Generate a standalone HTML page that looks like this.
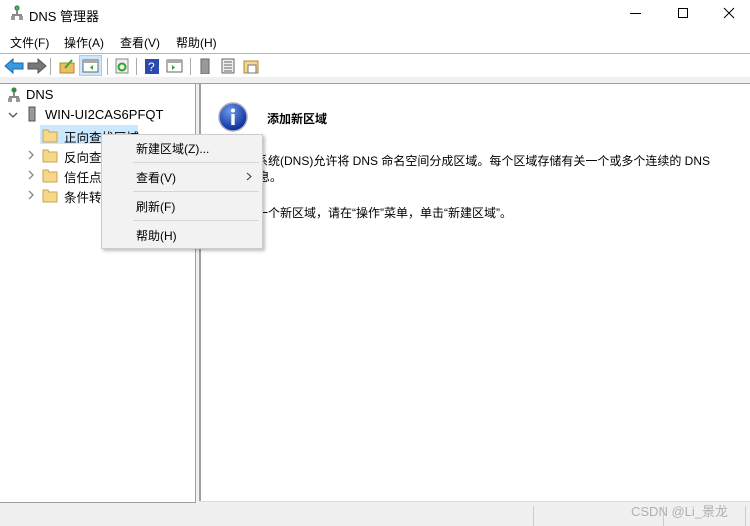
<!DOCTYPE html>
<html><head><meta charset="utf-8"><style>
*{margin:0;padding:0;box-sizing:border-box}
body{width:750px;height:526px;background:#f0f0f0;font-family:"Liberation Sans","Noto Sans CJK SC",sans-serif;font-size:12px;color:#000;position:relative;overflow:hidden}
.a{position:absolute;white-space:nowrap}
</style></head><body>
<div class="a" style="left:0;top:0;width:750px;height:54px;background:#fff"></div>
<svg class="a" style="left:10px;top:5px" width="14" height="16"><circle cx="7" cy="3" r="2.6" fill="#3a8a3a"/><circle cx="7" cy="3" r="1.3" fill="#4aa"/><rect x="6" y="5" width="2" height="4" fill="#888"/><rect x="2" y="9" width="10" height="2" fill="#888"/><rect x="1" y="11" width="4" height="4" fill="#999"/><rect x="9" y="11" width="4" height="4" fill="#999"/></svg>
<div class="a" style="left:29px;top:6px;font-size:13px">DNS 管理器</div>
<div class="a" style="left:630px;top:13px;width:11px;height:1px;background:#000"></div>
<div class="a" style="left:678px;top:8px;width:10px;height:10px;border:1px solid #000"></div>
<svg class="a" style="left:723px;top:7px" width="12" height="12"><path d="M1 1L11 11M11 1L1 11" stroke="#000" stroke-width="1"/></svg>
<div class="a" style="left:10px;top:34px">文件(F)</div>
<div class="a" style="left:64px;top:34px">操作(A)</div>
<div class="a" style="left:120px;top:34px">查看(V)</div>
<div class="a" style="left:176px;top:34px">帮助(H)</div>
<div class="a" style="left:0;top:53px;width:750px;height:1px;background:#b4b4bc"></div>
<div class="a" style="left:0;top:54px;width:750px;height:23px;background:#fff"></div>
<svg class="a" style="left:4px;top:58px" width="20" height="16"><path d="M1 8L9 1V5H19V11H9V15Z" fill="#3a9ae0" stroke="#1a6ab0"/></svg>
<svg class="a" style="left:27px;top:58px" width="20" height="16"><path d="M19 8L11 1V5H1V11H11V15Z" fill="#777" stroke="#555"/></svg>
<div class="a" style="left:50px;top:58px;width:1px;height:17px;background:#aaa"></div>
<svg class="a" style="left:59px;top:58px" width="16" height="16"><rect x="1" y="5" width="14" height="10" fill="#e8c060" stroke="#b08a30"/><path d="M6 10L13 2" stroke="#3a3" stroke-width="2"/></svg>
<div class="a" style="left:79px;top:55px;width:23px;height:21px;background:#cce8ff;border:1px solid #99d1ff"></div>
<svg class="a" style="left:82px;top:58px" width="17" height="16"><rect x="1" y="2" width="15" height="12" fill="#fff" stroke="#666"/><rect x="1" y="2" width="15" height="3" fill="#aaa"/><path d="M11 7L8 9.5L11 12Z" fill="#2a2"/></svg>
<div class="a" style="left:107px;top:58px;width:1px;height:17px;background:#aaa"></div>
<svg class="a" style="left:114px;top:58px" width="16" height="16"><rect x="2" y="1" width="12" height="14" fill="#eee" stroke="#888"/><circle cx="8" cy="9" r="3.5" fill="none" stroke="#2a2" stroke-width="2"/></svg>
<div class="a" style="left:136px;top:58px;width:1px;height:17px;background:#aaa"></div>
<svg class="a" style="left:144px;top:58px" width="16" height="16"><rect x="1" y="1" width="14" height="15" fill="#2a4ab0"/><text x="4" y="13" fill="#fff" font-size="12" font-family="Liberation Sans">?</text></svg>
<svg class="a" style="left:166px;top:58px" width="17" height="16"><rect x="1" y="2" width="15" height="12" fill="#fff" stroke="#666"/><rect x="1" y="2" width="15" height="3" fill="#aaa"/><path d="M6 7L9 9.5L6 12Z" fill="#2a2"/></svg>
<div class="a" style="left:190px;top:58px;width:1px;height:17px;background:#aaa"></div>
<svg class="a" style="left:200px;top:58px" width="10" height="16"><rect x="1" y="1" width="8" height="15" fill="#999" stroke="#666"/></svg>
<svg class="a" style="left:221px;top:58px" width="14" height="16"><rect x="1" y="1" width="12" height="14" fill="#eee" stroke="#666"/><path d="M3 4H11M3 7H11M3 10H11M3 13H11" stroke="#666"/></svg>
<svg class="a" style="left:243px;top:58px" width="16" height="16"><rect x="1" y="3" width="14" height="12" fill="#f0d890" stroke="#b08a30"/><rect x="5" y="7" width="8" height="8" fill="#fff" stroke="#777"/></svg>
<div class="a" style="left:0;top:83px;width:750px;height:1px;background:#a0a0a0"></div>
<div class="a" style="left:0;top:84px;width:196px;height:419px;background:#fff;border-right:1px solid #a0a0a0;border-bottom:1px solid #a0a0a0"></div>
<div class="a" style="left:199px;top:84px;width:551px;height:418px;background:#fff;border-left:2px solid #a0a0a0"></div>
<div class="a" style="left:199px;top:501px;width:551px;height:1px;background:#ddd"></div>
<svg class="a" style="left:7px;top:87px" width="14" height="16"><circle cx="7" cy="3" r="2.6" fill="#3a8a3a"/><rect x="6" y="5" width="2" height="4" fill="#888"/><rect x="2" y="9" width="10" height="2" fill="#888"/><rect x="1" y="11" width="4" height="4" fill="#999"/><rect x="9" y="11" width="4" height="4" fill="#999"/></svg>
<div class="a" style="left:26px;top:87px;font-size:13px">DNS</div>
<svg class="a" style="left:8px;top:111px" width="10" height="8"><path d="M1 2L5 6L9 2" stroke="#555" fill="none" stroke-width="1.3"/></svg>
<svg class="a" style="left:28px;top:106px" width="8" height="16"><rect x="1" y="1" width="6" height="14" fill="#999" stroke="#555"/></svg>
<div class="a" style="left:45px;top:107px;font-size:13px">WIN-UI2CAS6PFQT</div>
<div class="a" style="left:40px;top:125px;width:98px;height:19px;background:#cce8ff"></div>
<div class="a" style="left:64px;top:127px;font-size:12.5px">正向查找区域</div>
<div class="a" style="left:64px;top:147px;font-size:12.5px">反向查找区域</div>
<div class="a" style="left:64px;top:167px;font-size:12.5px">信任点</div>
<div class="a" style="left:64px;top:187px;font-size:12.5px">条件转发器</div>
<svg class="a" style="left:42px;top:127px" width="16" height="80">
<g fill="#f5d88a" stroke="#c9a550"><path d="M1 3H6L7 5H15V15H1Z"/><path d="M1 23H6L7 25H15V35H1Z"/><path d="M1 43H6L7 45H15V55H1Z"/><path d="M1 63H6L7 65H15V75H1Z"/></g></svg>
<svg class="a" style="left:27px;top:150px" width="8" height="50"><g stroke="#888" fill="none" stroke-width="1.3"><path d="M2 1L6 5L2 9"/><path d="M2 21L6 25L2 29"/><path d="M2 41L6 45L2 49"/></g></svg>
<svg class="a" style="left:218px;top:102px" width="30" height="30"><defs><radialGradient id="g" cx="40%" cy="30%" r="70%"><stop offset="0" stop-color="#6a9ae8"/><stop offset="1" stop-color="#0a2a9a"/></radialGradient></defs><circle cx="15" cy="15" r="14" fill="url(#g)" stroke="#aab" stroke-width="1.5"/><circle cx="15" cy="8.5" r="2" fill="#fff"/><rect x="13.3" y="12" width="3.4" height="11" fill="#fff"/></svg>
<div class="a" style="left:267px;top:110px;font-weight:bold">添加新区域</div>
<div class="a" style="left:232px;top:152px">域名系统(DNS)允许将 DNS 命名空间分成区域。每个区域存储有关一个或多个连续的 DNS</div>
<div class="a" style="left:222px;top:168px">域的信息。</div>
<div class="a" style="left:220px;top:204px">要添加一个新区域，请在“操作”菜单，单击“新建区域”。</div>
<div class="a" style="left:101px;top:134px;width:162px;height:115px;background:#f2f2f2;border:1px solid #ccc;box-shadow:2px 2px 3px rgba(0,0,0,.25)"></div>
<div class="a" style="left:136px;top:140px">新建区域(Z)...</div>
<div class="a" style="left:133px;top:162px;width:126px;height:1px;background:#d7d7d7"></div>
<div class="a" style="left:136px;top:169px">查看(V)</div>
<svg class="a" style="left:246px;top:172px" width="6" height="9"><path d="M1 1L5 4.5L1 8" stroke="#333" fill="none"/></svg>
<div class="a" style="left:133px;top:191px;width:126px;height:1px;background:#d7d7d7"></div>
<div class="a" style="left:136px;top:198px">刷新(F)</div>
<div class="a" style="left:133px;top:220px;width:126px;height:1px;background:#d7d7d7"></div>
<div class="a" style="left:136px;top:227px">帮助(H)</div>
<div class="a" style="left:533px;top:506px;width:1px;height:20px;background:#ccc"></div>
<div class="a" style="left:663px;top:506px;width:1px;height:20px;background:#ccc"></div>
<div class="a" style="left:745px;top:506px;width:1px;height:20px;background:#ccc"></div>
<div class="a" style="left:631px;top:501px;font-size:13px;color:#b0b0b0">CSDN @Li_景龙</div>
</body></html>
